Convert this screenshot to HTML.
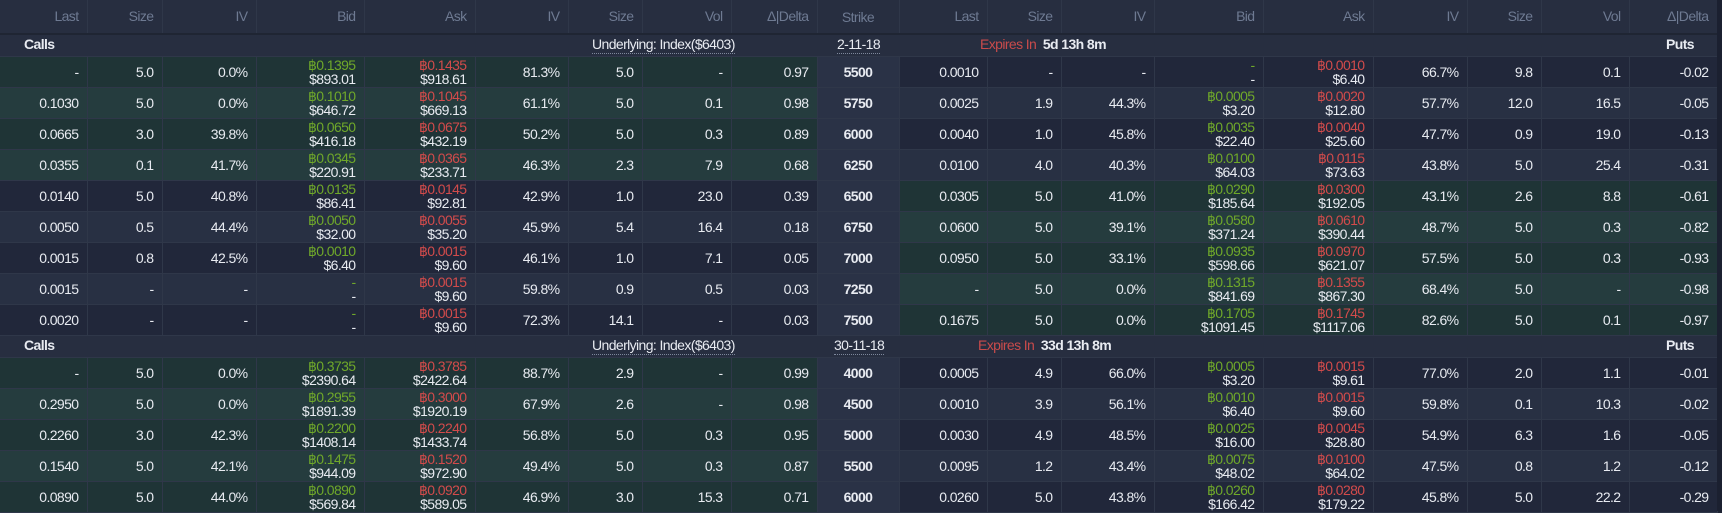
<!DOCTYPE html>
<html><head><meta charset="utf-8"><style>
*{margin:0;padding:0;box-sizing:border-box}
body{width:1722px;height:511px;background:#1e2333;overflow:hidden;font-family:"Liberation Sans","DejaVu Sans",sans-serif;font-size:14px;color:#e8ebf1;letter-spacing:-0.6px}
table{position:absolute;left:0;top:0;width:1717px;border-collapse:collapse;table-layout:fixed}
td,th{text-align:right;padding:0 8px 0 0;border-right:1px solid #2f3749;border-bottom:1px solid #2f3749;white-space:nowrap;overflow:hidden}
th{height:34px;background:#272e40;color:#6e7a92;font-weight:normal;border-bottom:2px solid #1f2533;padding-bottom:2px}
tr.g td{height:22px;background:#272e40;border-right:none;font-weight:bold;text-align:left}
tr.r td{height:31px;line-height:14px}
.o td.cg,.o td.pg{background:#1f3436}.e td.cg,.e td.pg{background:#253c3e}
.o td.cd,.o td.pd{background:#21273a}.e td.cd,.e td.pd{background:#283043}
td.s{background:#2a3246!important;text-align:center;font-weight:bold;padding:0}
.gr{color:#6fa82a}.rd{color:#d24b4b}
#sb{position:absolute;left:1717px;top:0;width:5px;height:511px;background:#1b2030}
.lbl{position:absolute;font-size:14px}
.u{border-bottom:1px dotted #7d879b;padding-bottom:1px}
</style></head><body>
<table>
<colgroup><col style="width:87px"><col style="width:75px"><col style="width:94px"><col style="width:108px"><col style="width:111px"><col style="width:93px"><col style="width:74px"><col style="width:89px"><col style="width:86px"><col style="width:82px"><col style="width:88px"><col style="width:74px"><col style="width:93px"><col style="width:109px"><col style="width:110px"><col style="width:94px"><col style="width:74px"><col style="width:88px"><col style="width:88px"></colgroup>
<tr><th>Last</th><th>Size</th><th>IV</th><th>Bid</th><th>Ask</th><th>IV</th><th>Size</th><th>Vol</th><th>Δ|Delta</th><th style="text-align:center;padding:0">Strike</th><th>Last</th><th>Size</th><th>IV</th><th>Bid</th><th>Ask</th><th>IV</th><th>Size</th><th>Vol</th><th>Δ|Delta</th></tr>
<tr class="g"><td colspan="19"></td></tr>
<tr class="r o"><td class="cg">-</td><td class="cg">5.0</td><td class="cg">0.0%</td><td class="cg"><span class="gr">฿0.1395</span><br>$893.01</td><td class="cg"><span class="rd">฿0.1435</span><br>$918.61</td><td class="cg">81.3%</td><td class="cg">5.0</td><td class="cg">-</td><td class="cg">0.97</td><td class="s">5500</td><td class="pd">0.0010</td><td class="pd">-</td><td class="pd">-</td><td class="pd"><span class="gr">-</span><br>-</td><td class="pd"><span class="rd">฿0.0010</span><br>$6.40</td><td class="pd">66.7%</td><td class="pd">9.8</td><td class="pd">0.1</td><td class="pd">-0.02</td></tr>
<tr class="r e"><td class="cg">0.1030</td><td class="cg">5.0</td><td class="cg">0.0%</td><td class="cg"><span class="gr">฿0.1010</span><br>$646.72</td><td class="cg"><span class="rd">฿0.1045</span><br>$669.13</td><td class="cg">61.1%</td><td class="cg">5.0</td><td class="cg">0.1</td><td class="cg">0.98</td><td class="s">5750</td><td class="pd">0.0025</td><td class="pd">1.9</td><td class="pd">44.3%</td><td class="pd"><span class="gr">฿0.0005</span><br>$3.20</td><td class="pd"><span class="rd">฿0.0020</span><br>$12.80</td><td class="pd">57.7%</td><td class="pd">12.0</td><td class="pd">16.5</td><td class="pd">-0.05</td></tr>
<tr class="r o"><td class="cg">0.0665</td><td class="cg">3.0</td><td class="cg">39.8%</td><td class="cg"><span class="gr">฿0.0650</span><br>$416.18</td><td class="cg"><span class="rd">฿0.0675</span><br>$432.19</td><td class="cg">50.2%</td><td class="cg">5.0</td><td class="cg">0.3</td><td class="cg">0.89</td><td class="s">6000</td><td class="pd">0.0040</td><td class="pd">1.0</td><td class="pd">45.8%</td><td class="pd"><span class="gr">฿0.0035</span><br>$22.40</td><td class="pd"><span class="rd">฿0.0040</span><br>$25.60</td><td class="pd">47.7%</td><td class="pd">0.9</td><td class="pd">19.0</td><td class="pd">-0.13</td></tr>
<tr class="r e"><td class="cg">0.0355</td><td class="cg">0.1</td><td class="cg">41.7%</td><td class="cg"><span class="gr">฿0.0345</span><br>$220.91</td><td class="cg"><span class="rd">฿0.0365</span><br>$233.71</td><td class="cg">46.3%</td><td class="cg">2.3</td><td class="cg">7.9</td><td class="cg">0.68</td><td class="s">6250</td><td class="pd">0.0100</td><td class="pd">4.0</td><td class="pd">40.3%</td><td class="pd"><span class="gr">฿0.0100</span><br>$64.03</td><td class="pd"><span class="rd">฿0.0115</span><br>$73.63</td><td class="pd">43.8%</td><td class="pd">5.0</td><td class="pd">25.4</td><td class="pd">-0.31</td></tr>
<tr class="r o"><td class="cd">0.0140</td><td class="cd">5.0</td><td class="cd">40.8%</td><td class="cd"><span class="gr">฿0.0135</span><br>$86.41</td><td class="cd"><span class="rd">฿0.0145</span><br>$92.81</td><td class="cd">42.9%</td><td class="cd">1.0</td><td class="cd">23.0</td><td class="cd">0.39</td><td class="s">6500</td><td class="pg">0.0305</td><td class="pg">5.0</td><td class="pg">41.0%</td><td class="pg"><span class="gr">฿0.0290</span><br>$185.64</td><td class="pg"><span class="rd">฿0.0300</span><br>$192.05</td><td class="pg">43.1%</td><td class="pg">2.6</td><td class="pg">8.8</td><td class="pg">-0.61</td></tr>
<tr class="r e"><td class="cd">0.0050</td><td class="cd">0.5</td><td class="cd">44.4%</td><td class="cd"><span class="gr">฿0.0050</span><br>$32.00</td><td class="cd"><span class="rd">฿0.0055</span><br>$35.20</td><td class="cd">45.9%</td><td class="cd">5.4</td><td class="cd">16.4</td><td class="cd">0.18</td><td class="s">6750</td><td class="pg">0.0600</td><td class="pg">5.0</td><td class="pg">39.1%</td><td class="pg"><span class="gr">฿0.0580</span><br>$371.24</td><td class="pg"><span class="rd">฿0.0610</span><br>$390.44</td><td class="pg">48.7%</td><td class="pg">5.0</td><td class="pg">0.3</td><td class="pg">-0.82</td></tr>
<tr class="r o"><td class="cd">0.0015</td><td class="cd">0.8</td><td class="cd">42.5%</td><td class="cd"><span class="gr">฿0.0010</span><br>$6.40</td><td class="cd"><span class="rd">฿0.0015</span><br>$9.60</td><td class="cd">46.1%</td><td class="cd">1.0</td><td class="cd">7.1</td><td class="cd">0.05</td><td class="s">7000</td><td class="pg">0.0950</td><td class="pg">5.0</td><td class="pg">33.1%</td><td class="pg"><span class="gr">฿0.0935</span><br>$598.66</td><td class="pg"><span class="rd">฿0.0970</span><br>$621.07</td><td class="pg">57.5%</td><td class="pg">5.0</td><td class="pg">0.3</td><td class="pg">-0.93</td></tr>
<tr class="r e"><td class="cd">0.0015</td><td class="cd">-</td><td class="cd">-</td><td class="cd"><span class="gr">-</span><br>-</td><td class="cd"><span class="rd">฿0.0015</span><br>$9.60</td><td class="cd">59.8%</td><td class="cd">0.9</td><td class="cd">0.5</td><td class="cd">0.03</td><td class="s">7250</td><td class="pg">-</td><td class="pg">5.0</td><td class="pg">0.0%</td><td class="pg"><span class="gr">฿0.1315</span><br>$841.69</td><td class="pg"><span class="rd">฿0.1355</span><br>$867.30</td><td class="pg">68.4%</td><td class="pg">5.0</td><td class="pg">-</td><td class="pg">-0.98</td></tr>
<tr class="r o"><td class="cd">0.0020</td><td class="cd">-</td><td class="cd">-</td><td class="cd"><span class="gr">-</span><br>-</td><td class="cd"><span class="rd">฿0.0015</span><br>$9.60</td><td class="cd">72.3%</td><td class="cd">14.1</td><td class="cd">-</td><td class="cd">0.03</td><td class="s">7500</td><td class="pg">0.1675</td><td class="pg">5.0</td><td class="pg">0.0%</td><td class="pg"><span class="gr">฿0.1705</span><br>$1091.45</td><td class="pg"><span class="rd">฿0.1745</span><br>$1117.06</td><td class="pg">82.6%</td><td class="pg">5.0</td><td class="pg">0.1</td><td class="pg">-0.97</td></tr>
<tr class="g"><td colspan="19"></td></tr>
<tr class="r o"><td class="cg">-</td><td class="cg">5.0</td><td class="cg">0.0%</td><td class="cg"><span class="gr">฿0.3735</span><br>$2390.64</td><td class="cg"><span class="rd">฿0.3785</span><br>$2422.64</td><td class="cg">88.7%</td><td class="cg">2.9</td><td class="cg">-</td><td class="cg">0.99</td><td class="s">4000</td><td class="pd">0.0005</td><td class="pd">4.9</td><td class="pd">66.0%</td><td class="pd"><span class="gr">฿0.0005</span><br>$3.20</td><td class="pd"><span class="rd">฿0.0015</span><br>$9.61</td><td class="pd">77.0%</td><td class="pd">2.0</td><td class="pd">1.1</td><td class="pd">-0.01</td></tr>
<tr class="r e"><td class="cg">0.2950</td><td class="cg">5.0</td><td class="cg">0.0%</td><td class="cg"><span class="gr">฿0.2955</span><br>$1891.39</td><td class="cg"><span class="rd">฿0.3000</span><br>$1920.19</td><td class="cg">67.9%</td><td class="cg">2.6</td><td class="cg">-</td><td class="cg">0.98</td><td class="s">4500</td><td class="pd">0.0010</td><td class="pd">3.9</td><td class="pd">56.1%</td><td class="pd"><span class="gr">฿0.0010</span><br>$6.40</td><td class="pd"><span class="rd">฿0.0015</span><br>$9.60</td><td class="pd">59.8%</td><td class="pd">0.1</td><td class="pd">10.3</td><td class="pd">-0.02</td></tr>
<tr class="r o"><td class="cg">0.2260</td><td class="cg">3.0</td><td class="cg">42.3%</td><td class="cg"><span class="gr">฿0.2200</span><br>$1408.14</td><td class="cg"><span class="rd">฿0.2240</span><br>$1433.74</td><td class="cg">56.8%</td><td class="cg">5.0</td><td class="cg">0.3</td><td class="cg">0.95</td><td class="s">5000</td><td class="pd">0.0030</td><td class="pd">4.9</td><td class="pd">48.5%</td><td class="pd"><span class="gr">฿0.0025</span><br>$16.00</td><td class="pd"><span class="rd">฿0.0045</span><br>$28.80</td><td class="pd">54.9%</td><td class="pd">6.3</td><td class="pd">1.6</td><td class="pd">-0.05</td></tr>
<tr class="r e"><td class="cg">0.1540</td><td class="cg">5.0</td><td class="cg">42.1%</td><td class="cg"><span class="gr">฿0.1475</span><br>$944.09</td><td class="cg"><span class="rd">฿0.1520</span><br>$972.90</td><td class="cg">49.4%</td><td class="cg">5.0</td><td class="cg">0.3</td><td class="cg">0.87</td><td class="s">5500</td><td class="pd">0.0095</td><td class="pd">1.2</td><td class="pd">43.4%</td><td class="pd"><span class="gr">฿0.0075</span><br>$48.02</td><td class="pd"><span class="rd">฿0.0100</span><br>$64.02</td><td class="pd">47.5%</td><td class="pd">0.8</td><td class="pd">1.2</td><td class="pd">-0.12</td></tr>
<tr class="r o"><td class="cg">0.0890</td><td class="cg">5.0</td><td class="cg">44.0%</td><td class="cg"><span class="gr">฿0.0890</span><br>$569.84</td><td class="cg"><span class="rd">฿0.0920</span><br>$589.05</td><td class="cg">46.9%</td><td class="cg">3.0</td><td class="cg">15.3</td><td class="cg">0.71</td><td class="s">6000</td><td class="pd">0.0260</td><td class="pd">5.0</td><td class="pd">43.8%</td><td class="pd"><span class="gr">฿0.0260</span><br>$166.42</td><td class="pd"><span class="rd">฿0.0280</span><br>$179.22</td><td class="pd">45.8%</td><td class="pd">5.0</td><td class="pd">22.2</td><td class="pd">-0.29</td></tr>
</table>
<div id="sb"></div>
<div class="lbl" style="left:24px;top:36px;font-weight:bold">Calls</div>
<div class="lbl" style="left:592px;top:36px"><span class="u">Underlying: Index($6403)</span></div>
<div class="lbl" style="left:837px;top:36px"><span class="u">2-11-18</span></div>
<div class="lbl" style="left:980px;top:36px"><span style="color:#c94b4b">Expires In</span>&nbsp; <b>5d 13h 8m</b></div>
<div class="lbl" style="left:1666px;top:36px;font-weight:bold">Puts</div>
<div class="lbl" style="left:24px;top:337px;font-weight:bold">Calls</div>
<div class="lbl" style="left:592px;top:337px"><span class="u">Underlying: Index($6403)</span></div>
<div class="lbl" style="left:834px;top:337px"><span class="u">30-11-18</span></div>
<div class="lbl" style="left:978px;top:337px"><span style="color:#c94b4b">Expires In</span>&nbsp; <b>33d 13h 8m</b></div>
<div class="lbl" style="left:1666px;top:337px;font-weight:bold">Puts</div>
</body></html>
